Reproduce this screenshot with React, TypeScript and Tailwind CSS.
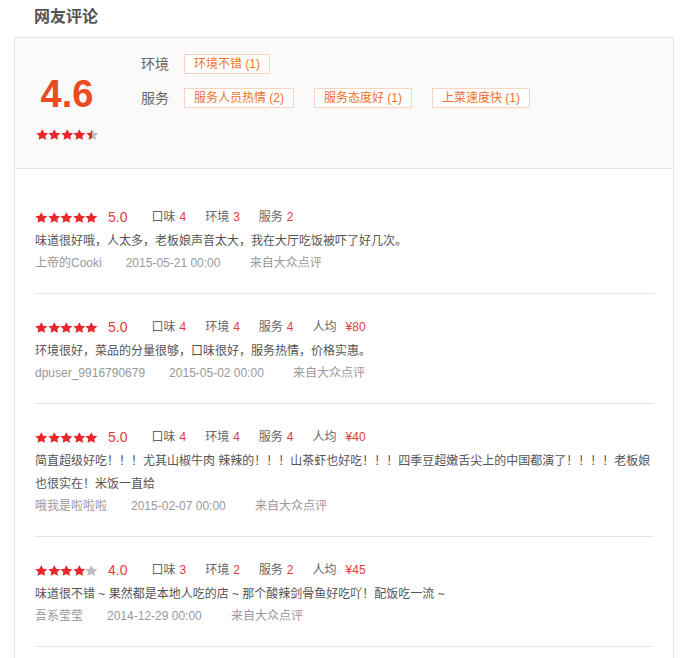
import React from "react";

const RED = "#e8282d";

function Star({ fill = 1, id }: { fill?: number; id?: string }) {
  const path =
    "M12 2l3.09 6.26L22 9.27l-5 4.87 1.18 6.88L12 17.77l-6.18 3.25L7 14.14 2 9.27l6.91-1.01L12 2z";
  if (fill >= 1 || fill <= 0) {
    return (
      <svg width="12.6" height="11" viewBox="1.6 1.6 20.8 19.8" preserveAspectRatio="none">
        <path d={path} fill={fill >= 1 ? RED : "#bdbdbd"} />
      </svg>
    );
  }
  return (
    <svg width="12.6" height="11" viewBox="1.6 1.6 20.8 19.8" preserveAspectRatio="none">
      <defs>
        <linearGradient id={id} x1="0" x2="1" y1="0" y2="0">
          <stop offset={`${fill * 100}%`} stopColor={RED} />
          <stop offset={`${fill * 100}%`} stopColor="#bdbdbd" />
        </linearGradient>
      </defs>
      <path d={path} fill={`url(#${id})`} />
    </svg>
  );
}

function Stars({ value, uid }: { value: number; uid: string }) {
  return (
    <div className="flex items-center">
      {[0, 1, 2, 3, 4].map((i) => {
        const f = Math.max(0, Math.min(1, value - i));
        return <Star key={i} fill={f} id={`${uid}-${i}`} />;
      })}
    </div>
  );
}

type Review = {
  stars: number;
  score: string;
  taste: string;
  env: string;
  service: string;
  price?: string;
  text: string[];
  name: string;
  date: string;
};

const reviews: Review[] = [
  {
    stars: 5,
    score: "5.0",
    taste: "4",
    env: "3",
    service: "2",
    text: ["味道很好哦，人太多，老板娘声音太大，我在大厅吃饭被吓了好几次。"],
    name: "上帝的Cooki",
    date: "2015-05-21 00:00",
  },
  {
    stars: 5,
    score: "5.0",
    taste: "4",
    env: "4",
    service: "4",
    price: "¥80",
    text: ["环境很好，菜品的分量很够，口味很好，服务热情，价格实惠。"],
    name: "dpuser_9916790679",
    date: "2015-05-02 00:00",
  },
  {
    stars: 5,
    score: "5.0",
    taste: "4",
    env: "4",
    service: "4",
    price: "¥40",
    text: [
      "简直超级好吃！！！尤其山椒牛肉 辣辣的！！！山茶虾也好吃！！！四季豆超嫩舌尖上的中国都演了！！！！老板娘",
      "也很实在！米饭一直给",
    ],
    name: "哦我是啦啦啦",
    date: "2015-02-07 00:00",
  },
  {
    stars: 4,
    score: "4.0",
    taste: "3",
    env: "2",
    service: "2",
    price: "¥45",
    text: ["味道很不错 ~ 果然都是本地人吃的店 ~ 那个酸辣剑骨鱼好吃吖！配饭吃一流 ~"],
    name: "吾系莹莹",
    date: "2014-12-29 00:00",
  },
];

function Tag({ children }: { children: React.ReactNode }) {
  return (
    <span className="inline-flex h-[20px] items-center border border-[#f7d3c0] bg-white px-[9px] text-[12px] leading-[18px] text-[#f0702c]">
      {children}
    </span>
  );
}

function Seg({ label, value, first }: { label: string; value: string; first?: boolean }) {
  return (
    <span className={first ? "ml-[24px] flex items-center" : "ml-[19px] flex items-center"}>
      <span className="text-[12px] text-[#666]">{label}</span>
      <span className="ml-[4px] text-[12px] text-[#e4393c]">{value}</span>
    </span>
  );
}

export default function App() {
  return (
    <div
      className="h-[658px] w-[688px] overflow-hidden bg-white"
      style={{ fontFamily: '"Liberation Sans", "Noto Sans CJK SC", sans-serif' }}
    >
      <h2 className="h-[37px] pl-[34px] pt-[7px] text-[16px] font-bold leading-[20px] text-[#555]">
        网友评论
      </h2>
      <div className="mx-[14px] h-[700px] border border-[#e6e6e6]">
        <div className="flex h-[131px] border-b border-[#e6e6e6] bg-[#fafafa]">
          <div className="flex w-[104px] flex-col items-center pt-[36px]">
            <div className="text-[38px] font-bold leading-[40px] text-[#ec4a1f]">4.6</div>
            <div className="mt-[15px]">
              <Stars value={4.5} uid="sum" />
            </div>
          </div>
          <div className="ml-[22px] flex flex-col gap-[14px] pt-[16px]">
            <div className="flex h-[20px] items-center">
              <span className="w-[43px] text-[14px] text-[#666]">环境</span>
              <Tag>环境不错 (1)</Tag>
            </div>
            <div className="flex h-[20px] items-center">
              <span className="w-[43px] text-[14px] text-[#666]">服务</span>
              <div className="flex gap-[20px]">
                <Tag>服务人员热情 (2)</Tag>
                <Tag>服务态度好 (1)</Tag>
                <Tag>上菜速度快 (1)</Tag>
              </div>
            </div>
          </div>
        </div>
        <div className="px-[20px] pr-[19px] pt-[15px]">
          {reviews.map((r, idx) => (
            <div key={idx} className="border-b border-[#e6e6e6] pb-[20px] pt-[23px]">
              <div className="flex h-[20px] items-center">
                <Stars value={r.stars} uid={`r${idx}`} />
                <span className="ml-[10px] text-[14px] leading-[20px] text-[#e4393c]">{r.score}</span>
                <Seg label="口味" value={r.taste} first />
                <Seg label="环境" value={r.env} />
                <Seg label="服务" value={r.service} />
                {r.price && (
                  <span className="ml-[19px] flex items-center">
                    <span className="text-[12px] text-[#666]">人均</span>
                    <span className="ml-[9px] text-[12px] text-[#e4393c]">{r.price}</span>
                  </span>
                )}
              </div>
              <div className="mt-[3px] text-[12px] leading-[23px] text-[#555]">
                {r.text.map((t, i) => (
                  <div key={i}>{t}</div>
                ))}
              </div>
              <div className="flex h-[20px] items-center text-[12px] text-[#999]">
                <span className="mr-[24px]">{r.name}</span>
                <span className="mr-[24px] inline-block w-[100px] whitespace-nowrap">{r.date}</span>
                <span>来自大众点评</span>
              </div>
            </div>
          ))}
        </div>
      </div>
    </div>
  );
}
